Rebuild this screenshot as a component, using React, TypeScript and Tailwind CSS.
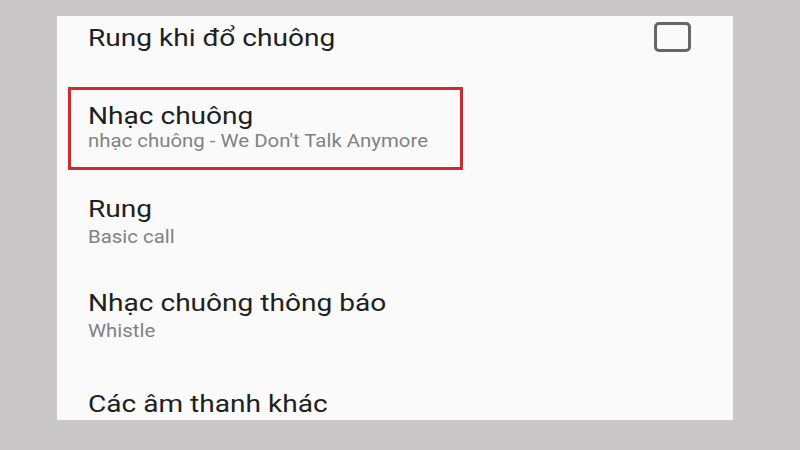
const title = "inline-block origin-left scale-x-[1.17] text-[24px] leading-[28px] text-[#1f1f1f]";
const sub = "inline-block origin-left scale-x-[1.165] text-[17.5px] leading-[22px] text-[#828282]";

export default function App() {
  return (
    <div className="w-[800px] h-[450px] bg-[#c9c7c8] pt-[16px] pl-[57px] overflow-hidden" style={{ fontFamily: "Roboto, 'Noto Sans', sans-serif" }}>
      <div className="w-[676px] h-[404px] bg-[#fafafa] flex flex-col">
        {/* Rung khi đổ chuông */}
        <div className="h-[71px] flex items-start justify-between pl-[31px] pr-[42px]">
          <span className={"mt-[8px] " + title}>Rung khi đổ chuông</span>
          <div className="mt-[6px] w-[37px] h-[30px] border-[3px] border-[#666] rounded-[5px]"></div>
        </div>

        {/* highlighted: Nhạc chuông */}
        <div className="ml-[11px] w-[395px] h-[83px] border-[3px] border-[#d22a2a] pl-[17px] pt-[12px] flex flex-col items-start">
          <span className={title}>Nhạc chuông</span>
          <span className={sub}>nhạc chuông - We Don't Talk Anymore</span>
        </div>

        <div className="pl-[31px] pt-[25px] flex flex-col items-start">
          <span className={title}>Rung</span>
          <span className={"mt-[3px] " + sub}>Basic call</span>
        </div>

        <div className="pl-[31px] pt-[41px] flex flex-col items-start">
          <span className={title}>Nhạc chuông thông báo</span>
          <span className={"mt-[3px] " + sub}>Whistle</span>
        </div>

        <div className="pl-[31px] pt-[48px] flex flex-col items-start">
          <span className={title}>Các âm thanh khác</span>
        </div>
      </div>
    </div>
  );
}
